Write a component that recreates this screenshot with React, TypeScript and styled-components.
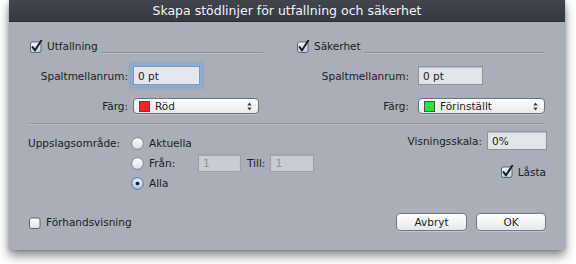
import React from 'react';
import styled, { createGlobalStyle } from 'styled-components';

const GlobalStyle = createGlobalStyle`
  html, body {
    margin: 0;
    padding: 0;
    background: #ffffff;
  }
  body {
    font-family: "DejaVu Sans", "Noto Sans", sans-serif;
    color: #1b1d22;
  }
`;

const Page = styled.div`
  width: 576px;
  height: 264px;
  padding-left: 9px;
  box-sizing: border-box;
  overflow: hidden;
`;

const Window = styled.div`
  width: 556px;
  height: 250px;
  display: flex;
  flex-direction: column;
  background: #a9aeb9;
  box-shadow: 0 6px 10px rgba(0, 0, 0, 0.45), 0 0 4px rgba(0, 0, 0, 0.25);
`;

const TitleBar = styled.div`
  height: 22px;
  flex: none;
  display: flex;
  align-items: center;
  justify-content: center;
  background: linear-gradient(#42454d, #363940);
  border-bottom: 1px solid #2a2c31;
  box-sizing: border-box;
  color: #f4f4f6;
  font-size: 12.5px;
`;

const Body = styled.div`
  flex: 1;
  display: flex;
  flex-direction: column;
  padding: 17px 20px 0 21px;
  font-size: 10.5px;
`;

const Columns = styled.div`
  display: grid;
  grid-template-columns: 234px 248px;
  column-gap: 33px;
`;

const Column = styled.div`
  display: flex;
  flex-direction: column;
`;

const GroupHeader = styled.div`
  height: 14px;
  display: flex;
  align-items: center;
`;

const HeaderLine = styled.div`
  flex: 1;
  align-self: flex-end;
  margin: 0 ${p => p.$trim}px 0 3px;
  border-bottom: 1px solid #8b909a;
  box-shadow: 0 1px 0 rgba(255, 255, 255, 0.2);
`;

const CheckLabel = styled.label`
  display: flex;
  align-items: center;
  gap: 4px;
`;

const FormGrid = styled.div`
  margin-top: 13px;
  display: grid;
  grid-template-columns: ${p => p.$labelWidth}px auto;
  column-gap: ${p => p.$gap}px;
  row-gap: 13px;
  align-items: center;
`;

const FieldLabel = styled.span`
  text-align: right;
  white-space: nowrap;
`;

const TextBox = styled.div`
  width: ${p => p.$width}px;
  height: ${p => p.$height || 19}px;
  box-sizing: border-box;
  display: flex;
  align-items: center;
  padding-left: 4px;
  background: ${p => (p.$disabled ? '#c9ccd2' : p.$focused ? '#e3e7ee' : '#e2e4e8')};
  color: ${p => (p.$disabled ? '#8d9198' : '#1b1d22')};
  border: 1px solid ${p => (p.$disabled ? '#9ea2aa' : '#8f939b')};
  box-shadow: ${p =>
    p.$focused
      ? '0 0 0 2px #86aee0, 0 0 3px 3px rgba(110, 150, 210, 0.55)'
      : 'inset 0 1px 1px rgba(0, 0, 0, 0.18)'};
`;

const SelectBox = styled.div`
  width: ${p => p.$width}px;
  height: 16px;
  box-sizing: border-box;
  display: flex;
  align-items: center;
  gap: 5px;
  padding: 0 6px 0 5px;
  background: linear-gradient(#ffffff, #f2f2f3 60%, #e9eaec);
  border: 1px solid #6e727b;
  border-radius: 4px;
  box-shadow: 0 1px 0 rgba(255, 255, 255, 0.25);
`;

const Swatch = styled.span`
  width: 11px;
  height: 11px;
  box-sizing: border-box;
  background: ${p => p.$color};
  border: 1px solid #4a4d52;
  flex: none;
`;

const SelectText = styled.span`
  flex: 1;
`;

const Separator = styled.div`
  margin-top: 9px;
  height: 1px;
  background: #8d929c;
  box-shadow: 0 1px 0 rgba(255, 255, 255, 0.18);
`;

const LowerSection = styled.div`
  margin-top: 9px;
  display: flex;
  justify-content: space-between;
`;

const RangeGroup = styled.div`
  display: flex;
  margin-left: -2px;
`;

const RangeLabel = styled.span`
  width: 92px;
  margin-right: 11px;
  height: 19px;
  display: flex;
  align-items: center;
  white-space: nowrap;
`;

const RadioList = styled.div`
  display: flex;
  flex-direction: column;
`;

const RadioRow = styled.div`
  height: 20px;
  display: flex;
  align-items: center;
`;

const RadioText = styled.span`
  margin-left: 5px;
  min-width: ${p => p.$minWidth || 0}px;
`;

const InlineLabel = styled.span`
  margin: 0 5px 0 6px;
`;

const ScaleGroup = styled.div`
  display: flex;
  flex-direction: column;
  align-items: flex-end;
  margin-right: -2px;
`;

const ScaleRow = styled.div`
  display: flex;
  align-items: center;
  gap: 5px;
  margin-top: -2px;
`;

const LockRow = styled.div`
  margin-top: 15px;
  margin-right: 1px;
`;

const Footer = styled.div`
  margin-top: 20px;
  display: flex;
  align-items: center;
  justify-content: space-between;
  margin-left: -1px;
  margin-right: -1px;
`;

const ButtonRow = styled.div`
  display: flex;
  gap: 9px;
`;

const Button = styled.button`
  width: ${p => p.$width}px;
  height: 18px;
  padding: 0;
  box-sizing: border-box;
  font-family: "DejaVu Sans", "Noto Sans", sans-serif;
  font-size: 10.5px;
  color: #1b1d22;
  background: linear-gradient(#ffffff, #f3f3f4 55%, #e6e7ea);
  border: 1px solid #737780;
  border-radius: 4px;
  box-shadow: 0 1px 0 rgba(255, 255, 255, 0.3);
`;

const Checkbox = ({ checked }: { checked: boolean }) => (
  <svg width="13" height="13" viewBox="0 0 13 13" style={{ flex: 'none' }}>
    <defs>
      <linearGradient id={checked ? 'cbOn' : 'cbOff'} x1="0" y1="0" x2="0" y2="1">
        <stop offset="0" stopColor={checked ? '#f4f8ff' : '#ffffff'} />
        <stop offset="1" stopColor={checked ? '#b9cbe6' : '#e2e3e6'} />
      </linearGradient>
    </defs>
    <rect
      x="0.5"
      y="2"
      width="10.5"
      height="10.5"
      rx="2"
      fill={`url(#${checked ? 'cbOn' : 'cbOff'})`}
      stroke="#5e6470"
    />
    {checked && (
      <path
        d="M2.6 7.2 L5 10.3 L11.2 0.8"
        fill="none"
        stroke="#1c2130"
        strokeWidth="2.1"
        strokeLinecap="round"
        strokeLinejoin="round"
      />
    )}
  </svg>
);

const Radio = ({ selected }: { selected?: boolean }) => (
  <svg width="13" height="13" viewBox="0 0 13 13" style={{ flex: 'none' }}>
    <defs>
      <linearGradient id={selected ? 'rbOn' : 'rbOff'} x1="0" y1="0" x2="0" y2="1">
        <stop offset="0" stopColor={selected ? '#e8f0fb' : '#ffffff'} />
        <stop offset="1" stopColor={selected ? '#a9c3e6' : '#dedfe3'} />
      </linearGradient>
    </defs>
    <circle
      cx="6.5"
      cy="6.5"
      r="5.8"
      fill={`url(#${selected ? 'rbOn' : 'rbOff'})`}
      stroke={selected ? '#55698a' : '#7b7f88'}
      strokeWidth="0.9"
    />
    {selected && <circle cx="6.5" cy="6.5" r="1.8" fill="#15181f" />}
  </svg>
);

const Stepper = () => (
  <svg width="5" height="9" viewBox="0 0 5 9" style={{ flex: 'none' }}>
    <path d="M0.3 3.4 L2.5 0.6 L4.7 3.4 Z" fill="#3a3d44" />
    <path d="M0.3 5.6 L2.5 8.4 L4.7 5.6 Z" fill="#3a3d44" />
  </svg>
);

export default function App() {
  return (
    <Page>
      <GlobalStyle />
      <Window>
        <TitleBar>Skapa stödlinjer för utfallning och säkerhet</TitleBar>
        <Body>
          <Columns>
            <Column>
              <GroupHeader>
                <CheckLabel>
                  <Checkbox checked />
                  Utfallning
                </CheckLabel>
                <HeaderLine $trim={1} />
              </GroupHeader>
              <FormGrid $labelWidth={98} $gap={5}>
                <FieldLabel>Spaltmellanrum:</FieldLabel>
                <TextBox $width={67} $focused>0 pt</TextBox>
                <FieldLabel>Färg:</FieldLabel>
                <SelectBox $width={126}>
                  <Swatch $color="#f0261c" />
                  <SelectText>Röd</SelectText>
                  <Stepper />
                </SelectBox>
              </FormGrid>
            </Column>
            <Column>
              <GroupHeader>
                <CheckLabel>
                  <Checkbox checked />
                  Säkerhet
                </CheckLabel>
                <HeaderLine $trim={0} />
              </GroupHeader>
              <FormGrid $labelWidth={112} $gap={9}>
                <FieldLabel>Spaltmellanrum:</FieldLabel>
                <TextBox $width={65}>0 pt</TextBox>
                <FieldLabel>Färg:</FieldLabel>
                <SelectBox $width={127}>
                  <Swatch $color="#27e83a" />
                  <SelectText>Förinställt</SelectText>
                  <Stepper />
                </SelectBox>
              </FormGrid>
            </Column>
          </Columns>

          <Separator />

          <LowerSection>
            <RangeGroup>
              <RangeLabel>Uppslagsområde:</RangeLabel>
              <RadioList>
                <RadioRow>
                  <Radio />
                  <RadioText>Aktuella</RadioText>
                </RadioRow>
                <RadioRow>
                  <Radio />
                  <RadioText $minWidth={49}>Från:</RadioText>
                  <TextBox $width={43} $height={18} $disabled>
                    1
                  </TextBox>
                  <InlineLabel>Till:</InlineLabel>
                  <TextBox $width={44} $height={18} $disabled>
                    1
                  </TextBox>
                </RadioRow>
                <RadioRow>
                  <Radio selected />
                  <RadioText>Alla</RadioText>
                </RadioRow>
              </RadioList>
            </RangeGroup>
            <ScaleGroup>
              <ScaleRow>
                <span>Visningsskala:</span>
                <TextBox $width={60}>0%</TextBox>
              </ScaleRow>
              <LockRow>
                <CheckLabel>
                  <Checkbox checked />
                  Låsta
                </CheckLabel>
              </LockRow>
            </ScaleGroup>
          </LowerSection>

          <Footer>
            <CheckLabel>
              <Checkbox checked={false} />
              Förhandsvisning
            </CheckLabel>
            <ButtonRow>
              <Button $width={71}>Avbryt</Button>
              <Button $width={70}>OK</Button>
            </ButtonRow>
          </Footer>
        </Body>
      </Window>
    </Page>
  );
}
